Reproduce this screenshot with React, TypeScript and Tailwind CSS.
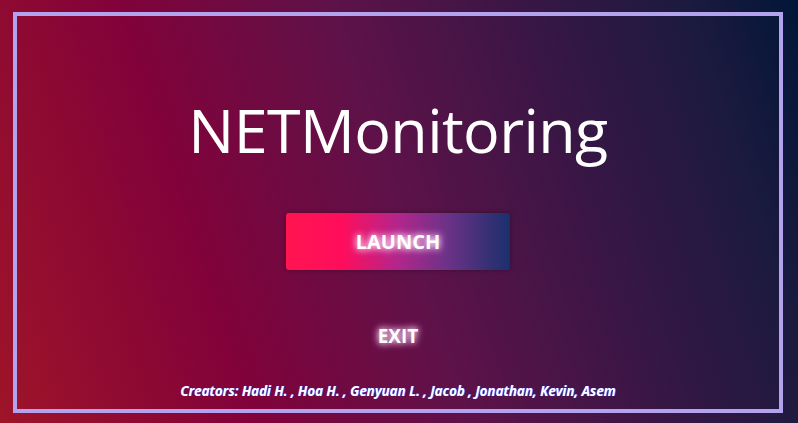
export default function App() {
  return (
    <main className="h-[423px] w-[798px] overflow-hidden bg-[linear-gradient(72deg,#9e1428_0%,#82023a_27%,#5e1249_50%,#311744_75%,#1c1a3f_88%,#011638_100%)] pt-[12px] pl-[13px] font-['Segoe_UI','Open_Sans',sans-serif] text-white">
      <div className="flex h-[401px] w-[770px] flex-col items-center border-[4px] border-[#b3a3ef]">
        <h1 className="mt-[83px] text-[61px] leading-none font-normal tracking-[-0.6px]">NETMonitoring</h1>
        <button className="mt-[53px] flex h-[57px] w-[224px] items-center justify-center rounded-[3px] bg-[linear-gradient(90deg,#ff1550_0%,#ff0d5c_25%,#b2268c_50%,#6c3288_72%,#1b2f6c_100%)] text-[20px] font-bold shadow-[0_0_4px_rgba(0,0,0,0.35)] [text-shadow:0_0_6px_#fff,0_0_10px_#ff9be8]">
          LAUNCH
        </button>
        <button className="mt-[52px] text-[19px] font-bold [text-shadow:0_0_6px_#fff,0_0_10px_#ff9be8]">EXIT</button>
        <p className="mt-[30px] text-[13.5px] font-bold italic tracking-[-0.1px] [text-shadow:1px_0_0_#3050ff]">
          Creators: Hadi H. , Hoa H. , Genyuan L. , Jacob , Jonathan, Kevin, Asem
        </p>
      </div>
    </main>
  );
}
